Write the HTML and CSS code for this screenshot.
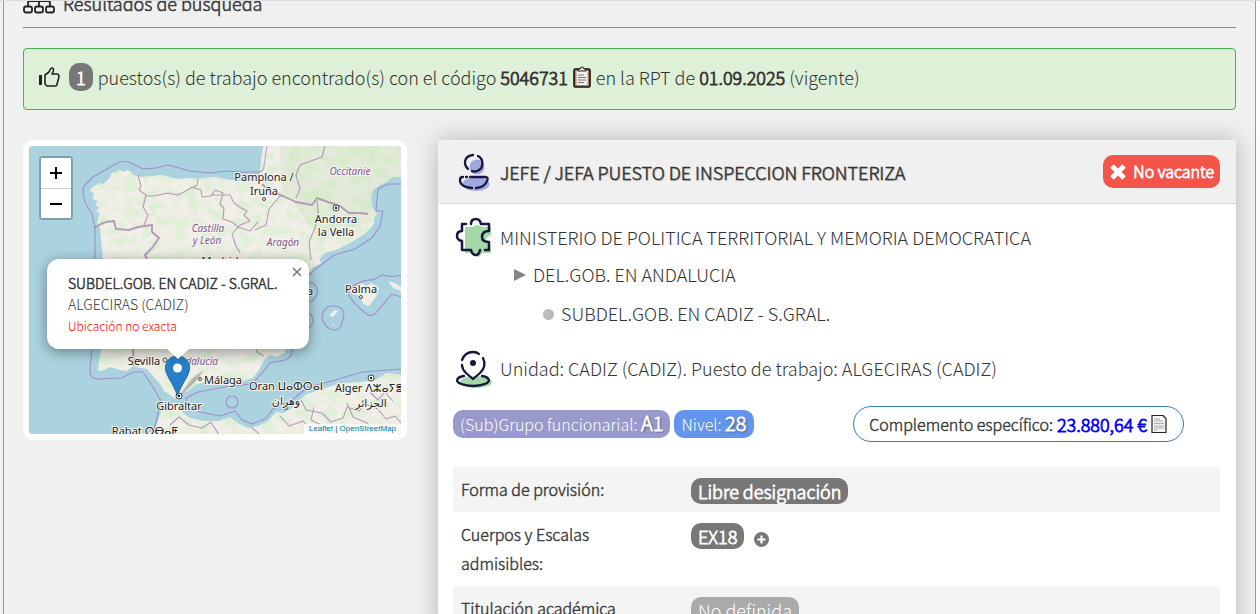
FILE: index.html
```html
<!DOCTYPE html>
<html lang="es">
<head>
<meta charset="utf-8">
<title>Resultados de búsqueda</title>
<link rel="stylesheet" href="styles.css">
</head>
<body>
<main class="frame">
  <h2 class="heading">
    <svg width="32" height="26" viewBox="0 0 32 26" fill="none" stroke="#222" stroke-width="1.800"><rect x="11" y="1" width="10" height="7" rx="2"/><path d="M16 8v10M5 18v-3q0-2 2-2h18q2 0 2 2v3"/><rect x="1" y="18.500" width="8" height="6" rx="2"/><rect x="12" y="18.500" width="8" height="6" rx="2"/><rect x="23" y="18.500" width="8" height="6" rx="2"/></svg>
    <span>Resultados de búsqueda</span>
  </h2>

  <div class="alert">
    <svg class="thumb" width="22" height="20" viewBox="0 0 22 20"><path d="M1 8h3v10H1z" fill="#222"/><path d="M7 8l4-3c1-2 1-4 3-4s2 3 0 6h5c2 0 2 2 2 3l-2 7c0 1-1 2-2 2H9l-2-2z" fill="none" stroke="#222" stroke-width="1.600" stroke-linejoin="round"/></svg>
    <span class="badge count">1</span>
    <span>puestos(s) de trabajo encontrado(s) con el código <b>5046731</b></span>
    <button class="icon-btn clip" aria-label="Copiar código"><svg width="18" height="22" viewBox="0 0 18 22"><rect x="1" y="3" width="16" height="18" rx="1.500" fill="#b98560" stroke="#111" stroke-width="1.600"/><path d="M3.500 5h11v14h-11z" fill="#f1f1f3"/><path d="M5 5V3h2q0-2 2-2t2 2h2v2z" fill="#ddd" stroke="#222"/><path d="M5 9h6M5 11.500h8M5 14h8M5 16.500h6" stroke="#777"/></svg></button>
    <span>en la RPT de <b>01.09.2025</b> (vigente)</span>
  </div>

  <div class="columns">
    <section class="map" aria-label="Mapa">
      <svg class="tiles" viewBox="29 146 372 288" preserveAspectRatio="xMidYMid slice">
        <defs>
          <path id="iberia" d="M90 190l4-4 3-1 3-2 3 1 6-5 2-4 1-3 3 1 4-3 5 2 3-2 3 1 3 4 9 2 11-1 8-1 5 1 6 2 8 1 10-1 8 1 12-2 11 1 9 2 13 1 9-1 8-6 1-14 3-19H401V177L392 177L388 181L380 185L373 190L371 198L372 206L377 214L374 218L374 224L369 230L363 235L350 243L338 249L325 253L319 259L322 263L313 267L306 278L298 294L297 306L302 320L294 330L285 345L285 353L276 357L270 355L264 360L259 370L253 378L243 381L220 381L205 382L195 385L188 391L182 393L179 400L173 397L164 391L160 384L154 377L147 369L141 368L133 366L127 371L120 370L110 367L104 370L98 371L99 362L101 352L104 338L97 320L96 305L103 285V259L101 240L100 228L97 222L100 213L96 212L99 207L95 205L98 201L92 199L94 194z"/>
          <path id="africa" d="M162 409L167 405L178 404L183 413L190 418L203 421L220 421L230 417L238 423L248 428L258 426L268 421L276 412L283 413L291 409L298 401L307 394L320 390L331 386L343 383L360 382L375 380L387 373L401 375V440H151Q156 428 162 409z"/>
          <clipPath id="land"><use href="#iberia"/><use href="#africa"/></clipPath>
          <filter id="woods" x="0" y="0" width="1" height="1"><feTurbulence type="fractalNoise" baseFrequency="0.080 0.110" numOctaves="5" seed="8"/><feColorMatrix values="0 0 0 0 .72  0 0 0 0 .86  0 0 0 0 .66  4.500 0 0 0 -2"/></filter>
        </defs>
        <path d="M29 146h372v288H29z" fill="#aad3df"/>
        <g fill="#f1eee8"><use href="#iberia"/><use href="#africa"/><path d="M350 291l12-8 4 3 6-3 7 5-2 7-8 11-6-2-3-8-7-2zM388 281l7 2 6 4v4l-8-3zM329 315l6-5 3 1-5 6zM333 323l2 3-2-1z"/></g>
        <g clip-path="url(#land)"><path d="M29 146h372v288H29z" filter="url(#woods)"/><path d="M280 146h121v45l-30 30-50 20-40-55z" fill="#bfe0b0" opacity=".25"/></g>
        <g fill="none" stroke="#b29bb5" stroke-width="1.100" stroke-linejoin="round">
          <path d="M94 228L101 224L106 222L114 221L116 229L129 230L138 227L152 225V232L159 238L152 248L145 255L147 259M133 349L134 366" stroke-width="1.900"/>
          <path d="M138 175l3 11-2 4 7 5-3 12 5 8-4 10M145 196l9 0 14-3 10 2 19-10 1-6M191 187l10 3 1 7 9-1 4-6 8 3-3 11 4 4-1 11 9 3 6 5 12 4 8-9M212 195l18 0 4 8 7 5 6 3-3 4 6 6-10 4-8 9 4 12 4 7M281 195l-12 14-3 16-11 5M317 200l1 13-3 15-6 14 2 18M325 146l-3 11-22 8-4 10 4 14-4 9"/>
          <path d="M262 184L268 190L283 196L296 202L312 205L317 198L328 202L340 206L349 213L360 213L368 214" stroke-width="1.900"/>
          <path d="M256 349l2 4 6 3M301 400l5 10 16 3 9 9 12-4 4-11 12 4 6-7 13 5 8 10 9-3 8 9M280 416l9 10 14-5 12 13M314 407l-3 13 18 9 4 5M347 403l6 14 14 6 10 11M370 392l8 8 7-8 8 9M170 425l9-8 10 8 13 3 9-6 8 13M251 427l8 7"/>
          <g stroke="#92a" opacity=".4"><path d="M95 259V228L92 214Q80 197 84 186L93 177L117 163Q124 160 131 163L143 169L156 168L168 165L190 171L210 173L226 171L240 172L258 172Q264 172 264 166L267 146"/><path d="M92 349L90 368Q89 379 98 379L122 378L133 372H143L153 387L161 401L154 430M186 398L198 392L230 386L252 384L262 373L270 363L285 360Q293 357 292 349M186 398Q186 405 200 412L220 416L235 411L242 420L252 424L265 419L273 409L291 401L308 387L332 381L362 372L401 369M401 184H388L378 189L376 211H383L380 226L372 238L355 249L334 255L317 268L309 275M309 303q12-8 7-17-4-5-9-3M309 328q6-6 3-11-2-5-6-4M348 290Q361 279 373 280L382 275Q393 278 401 275M348 290Q347 299 368 315Q374 317 379 309L392 294L401 297M322 318q1-13 13-12 9 1 9 9l-3 11q-4 6-11 3-6-3-8-11z"/><circle cx="232" cy="402" r="6"/></g>
        </g>
        <g fill="#fff" stroke="#444" stroke-width="1"><circle cx="264" cy="199" r="1.500"/><circle cx="165" cy="360" r="2"/><circle cx="200" cy="379" r="1.500"/><circle cx="361" cy="297" r="1.500"/><circle cx="286" cy="408" r="1.500"/><circle cx="336" cy="208" r="3"/><circle cx="371" cy="378" r="3"/><circle cx="179" cy="396" r="3"/></g>
        <g fill="#222"><circle cx="336" cy="208" r="1.200"/><circle cx="371" cy="378" r="1.200"/><circle cx="179" cy="396" r="1.200"/></g>
        <g class="place" text-anchor="middle">
          <text x="264" y="181">Pamplona /</text><text x="264" y="195">Iruña</text><text x="336" y="223">Andorra</text><text x="336" y="236">la Vella</text><text x="220" y="265">Madrid</text><text x="310" y="295">a</text>
          <text x="361" y="293">Palma</text><text x="144" y="365">Sevilla</text><text x="223" y="384">Málaga</text><text x="179" y="410">Gibraltar</text><text x="286" y="390">Oran ⵡⴰⵀⵔⴰⵏ</text><text x="286" y="405">وهران</text><text x="335" y="392" text-anchor="start">Alger ⴷⵣⴰⵢⴻⵔ</text><text x="371" y="407">الجزائر</text><text x="145" y="435">Rabat ⵔⴱⴰⵟ</text>
        </g>
        <g class="region" text-anchor="middle"><text x="350" y="175">Occitanie</text><text x="283" y="246">Aragón</text><text x="208" y="232">Castilla</text><text x="207" y="244">y León</text><text x="196" y="365">Andalucía</text></g>
        <path d="M179 396l10-14q8-9 14-11-5 10-23 25z" fill="#000" opacity=".22"/>
        <path d="M177.500 356c-7 0-12 5-12 12 0 8 8 15 12 28 4-13 12-20 12-28 0-7-5-12-12-12z" fill="#267fca" stroke="#2e6c97"/><circle cx="177.500" cy="368" r="4.500" fill="#fff"/>
      </svg>
      <div class="zoom"><button aria-label="Acercar"><svg width="14" height="14" viewBox="0 0 14 14" stroke="#000" stroke-width="2"><path d="M1 7h12M7 1v12"/></svg></button><button aria-label="Alejar"><svg width="14" height="14" viewBox="0 0 14 14" stroke="#000" stroke-width="2"><path d="M1 7h12"/></svg></button></div>
      <div class="popup">
        <button class="close" aria-label="Cerrar"><svg width="10" height="10" viewBox="0 0 10 10" stroke="#757575" stroke-width="1.500"><path d="M1 1l8 8M9 1l-8 8"/></svg></button>
        <b>SUBDEL.GOB. EN CADIZ - S.GRAL.</b>
        <span>ALGECIRAS (CADIZ)</span>
        <small>Ubicación no exacta</small>
      </div>
      <div class="attribution"><a href="#leaflet">Leaflet</a> | <a href="#osm">OpenStreetMap</a></div>
    </section>

    <article class="card">
      <header class="card-head">
        <svg width="34" height="40" viewBox="0 0 34 40" fill="none" stroke="#17173f" stroke-width="2.300" stroke-linecap="round"><g fill="#a2a8dc" stroke="none"><circle cx="19" cy="15" r="7.500"/><ellipse cx="18" cy="32" rx="13.500" ry="7"/></g><path d="M10 17C5 12 6 4 15 3M20 4c6 3 6 13-1 15q-3 1-5 0M8 25h1M12 25h15q4 0 2 4-2 6-11 7M14 36Q2 35 2 28q0-3 3-3"/></svg>
        <h3>JEFE / JEFA PUESTO DE INSPECCION FRONTERIZA</h3>
        <span class="vacancy"><svg width="16" height="16" viewBox="0 0 16 16" stroke="#fff" stroke-width="5"><path d="M2 2l12 12M14 2L2 14"/></svg>No vacante</span>
      </header>
      <div class="card-body">
        <div class="unit root">
          <svg width="38" height="42" viewBox="0 0 38 42" fill="none" stroke="#17173f" stroke-width="2.500" stroke-linecap="round" stroke-linejoin="round"><path d="M10 10h8q4-4 9 0h9v8q-9 4-1 10l1 8H27q-4 8-9 0H10z" fill="#a5d8a7" stroke="none"/><path d="M11 7H7v7q-5 0-5 5 0 4 5 5v9h9q1 5 5 5 3 0 4-5M16 7q0-5 5-5 4 0 5 5h8v7q-7 0-7 6 0 5 7 5v8h-4"/></svg>
          <span>MINISTERIO DE POLITICA TERRITORIAL Y MEMORIA DEMOCRATICA</span>
        </div>
        <div class="unit level-1"><svg width="12" height="12" viewBox="0 0 12 12"><path d="M0 0l12 6-12 6z" fill="#868686"/></svg><span>DEL.GOB. EN ANDALUCIA</span></div>
        <div class="unit level-2"><i class="dot"></i><span>SUBDEL.GOB. EN CADIZ - S.GRAL.</span></div>
        <div class="unit place-row">
          <svg width="38" height="40" viewBox="0 0 38 40" fill="none" stroke="#17173f" stroke-width="2.300" stroke-linecap="round"><ellipse cx="21" cy="33" rx="16" ry="6" fill="#a5d8a7" stroke="none"/><path d="M7 11q3-8 11-8 4 0 6 2M28 9q4 8-3 15l-7 6-7-6q-4-4-4-8M9 27q-7 1-7 5 2 4 16 5 14-1 16-5 0-4-7-5"/><circle cx="18" cy="14" r="3" fill="#17173f" stroke="none"/></svg>
          <span>Unidad: CADIZ (CADIZ). Puesto de trabajo: ALGECIRAS (CADIZ)</span>
        </div>
        <div class="facts">
          <span class="pill group">(Sub)Grupo funcionarial: <b>A1</b></span>
          <span class="pill grade">Nivel: <b>28</b></span>
          <span class="bonus">Complemento específico: <b>23.880,64 €</b>
            <button class="icon-btn" aria-label="Ver detalle"><svg width="16" height="18" viewBox="0 0 16 18"><path d="M1 .5h11l3 3v14H1z" fill="#f5f5f5" stroke="#222" stroke-width="1.200"/><path d="M3 4h6M3 6h9M3 8.500h10M3 11h10M3 13h10M3 15h3" stroke="#aaa"/></svg></button></span>
        </div>
        <table class="details">
          <tr><th scope="row">Forma de provisión:</th><td><span class="badge">Libre designación</span></td></tr>
          <tr><th scope="row">Cuerpos y Escalas admisibles:</th><td><span class="badge">EX18</span><button class="icon-btn more" aria-label="Ver más"><svg width="15" height="15" viewBox="0 0 15 15"><circle cx="7.500" cy="7.500" r="7.500" fill="#777"/><path d="M3.500 7.500h8M7.500 3.500v8" stroke="#fff" stroke-width="2.200"/></svg></button></td></tr>
          <tr><th scope="row">Titulación académica</th><td><span class="badge undefined">No definida</span></td></tr>
        </table>
      </div>
    </article>
  </div>
</main>
</body>
</html>
```
FILE: styles.css
```css
* { box-sizing: border-box; }
html { height: 100%; overflow: hidden; }
body {
  height: 100%;
  margin: 0;
  overflow: hidden;
  background: linear-gradient(90deg, #f0f0f0 50%, #fdfdfd 50%);
  border-top: 1px solid #ddd;
  color: #333;
  font-family: "Noto Sans CJK SC", "Noto Sans", sans-serif;
  font-size: 18px;
  font-weight: 300;
  line-height: 28px;
}
/* Bold text is the light face with a thickened outline. */
b, .badge, .vacancy {
  font-weight: 300;
  -webkit-text-stroke: 0.8px currentColor;
}
svg { flex: none; }
button { font: inherit; cursor: pointer; }
.frame {
  min-height: 100%;
  margin: 0 4px 0 3px;
  padding: 0 19px;
  border: solid #999;
  border-width: 0 1px;
  background: #f0f0f0;
}
.heading {
  display: flex;
  align-items: center;
  gap: 8px;
  height: 42px;
  margin: -15px 0 20px;
  padding-bottom: 7px;
  border-bottom: 1px solid #888;
  font-size: 18px;
  font-weight: 300;
  -webkit-text-stroke: 0.5px currentColor;
}
.heading svg { margin-bottom: 4px; }
.alert {
  display: flex;
  align-items: center;
  gap: 5px;
  min-height: 62px;
  padding: 0 14px 4px;
  border: 1px solid #4cae4c;
  border-radius: 4px;
  background: #dff0d8;
}
.thumb { margin-right: 4px; }
.icon-btn { display: inline-flex; padding: 0; border: 0; background: none; }
.badge {
  display: inline-block;
  padding: 0 7px;
  border-radius: 10px;
  background: #777;
  color: #fff;
  line-height: 26px;
}
.badge.count { line-height: 28px; }
.badge.undefined { background: #aaa; -webkit-text-stroke: 0; }
.columns {
  display: grid;
  grid-template-columns: 384px minmax(0, 1fr);
  align-items: start;
  gap: 31px;
  margin-top: 30px;
}
.map {
  position: relative;
  height: 300px;
  overflow: hidden;
  border: 6px solid #fff;
  border-radius: 10px;
  background: #aad3df;
}
.tiles { display: block; width: 100%; height: 100%; }
.place, .region {
  font-family: "Noto Sans", "DejaVu Sans", sans-serif;
  font-size: 11px;
  font-weight: 400;
  fill: #222;
  paint-order: stroke;
  stroke: #f7f5f0;
  stroke-width: 2px;
}
.region { font-size: 10px; font-style: italic; fill: #805a91; }
.zoom {
  position: absolute;
  top: 10px;
  left: 10px;
  border: 2px solid rgba(0, 0, 0, .25);
  border-radius: 4px;
}
.zoom button {
  display: grid;
  place-items: center;
  width: 30px;
  height: 30px;
  padding: 0;
  border: 0;
  background: #fff;
}
.zoom button + button { border-top: 1px solid #ccc; }
.popup {
  position: absolute;
  top: 113px;
  left: 18px;
  display: flex;
  flex-direction: column;
  width: 262px;
  height: 90px;
  padding: 14px 21px;
  border-radius: 12px;
  background: #fff;
  box-shadow: 0 3px 14px rgba(0, 0, 0, .4);
  font-size: 14px;
  line-height: 21px;
  white-space: nowrap;
}
.popup b { -webkit-text-stroke: 0.5px currentColor; }
.popup::after {
  content: "";
  position: absolute;
  top: 100%;
  left: 120px;
  border: solid transparent;
  border-width: 10px 11px 0;
  border-top-color: #fff;
}
.popup small { color: #f00; font-size: 12px; }
.close {
  position: absolute;
  top: 8px;
  right: 7px;
  display: flex;
  padding: 0;
  border: 0;
  background: none;
}
.attribution {
  position: absolute;
  right: 0;
  bottom: 0;
  padding: 0 5px;
  background: rgba(255, 255, 255, .8);
  font: 8px/10px "Liberation Sans", sans-serif;
}
.attribution a { color: #0078a8; text-decoration: none; }
.card {
  background: #fff;
  border-radius: 4px;
  box-shadow: 0 0 24px rgba(0, 0, 0, .25);
}
.card-head {
  display: flex;
  align-items: center;
  gap: 8px;
  min-height: 64px;
  padding: 0 16px 0 20px;
  border-bottom: 1px solid #ddd;
  border-radius: 4px 4px 0 0;
  background: #f0f0f0;
}
.card-head h3 {
  flex: 1;
  margin: 0;
  font-size: 18px;
  font-weight: 300;
  -webkit-text-stroke: 0.5px currentColor;
  text-shadow: 1px 1px 1px #bbb;
}
.vacancy {
  display: flex;
  align-items: center;
  gap: 7px;
  padding: 0 6px 0 7px;
  border-radius: 10px;
  background: #f3554b;
  color: #fff;
  font-size: 16px;
  line-height: 33px;
}
.card-body { padding: 13px 16px 0 15px; }
.unit { display: flex; align-items: center; gap: 7px; }
.unit span { margin-bottom: 2px; }
.root { padding-left: 2px; }
.level-1 { height: 32px; padding-left: 61px; }
.level-2 { height: 46px; padding-left: 90px; }
.dot { width: 11px; height: 11px; border-radius: 50%; background: #bbb; }
.place-row { height: 64px; padding-left: 2px; }
.facts { display: flex; align-items: center; gap: 4px; padding: 5px 0 25px; }
.pill {
  padding: 0 7px;
  border-radius: 10px;
  color: #fff;
  font-size: 16px;
}
.pill b { font-size: 20px; line-height: 1; text-shadow: 1px 1px 2px #333; }
.group { background: #9999cc; }
.grade { background: #6495ed; }
.bonus {
  display: flex;
  align-items: center;
  gap: 4px;
  margin: 0 36px 0 auto;
  padding: 3px 16px 3px 15px;
  border: 1px solid #337ab7;
  border-radius: 18px;
  font-size: 16px;
  -webkit-text-stroke: 0.4px currentColor;
}
.bonus b { color: #00f; font-size: 18px; }
.details { width: 100%; border-collapse: collapse; }
.details th, .details td {
  padding: 8px;
  text-align: left;
  vertical-align: top;
  font-size: 16px;
  line-height: 29px;
}
.details th {
  width: 230px;
  padding-right: 60px;
  font-weight: 300;
  -webkit-text-stroke: 0.4px currentColor;
}
.details td { padding: 11px 8px 5px; }
.details tr:nth-child(odd) { background: #f4f4f4; }
.details .badge { font-size: 18px; line-height: 26px; }
.more { margin-left: 10px; vertical-align: middle; }
```
